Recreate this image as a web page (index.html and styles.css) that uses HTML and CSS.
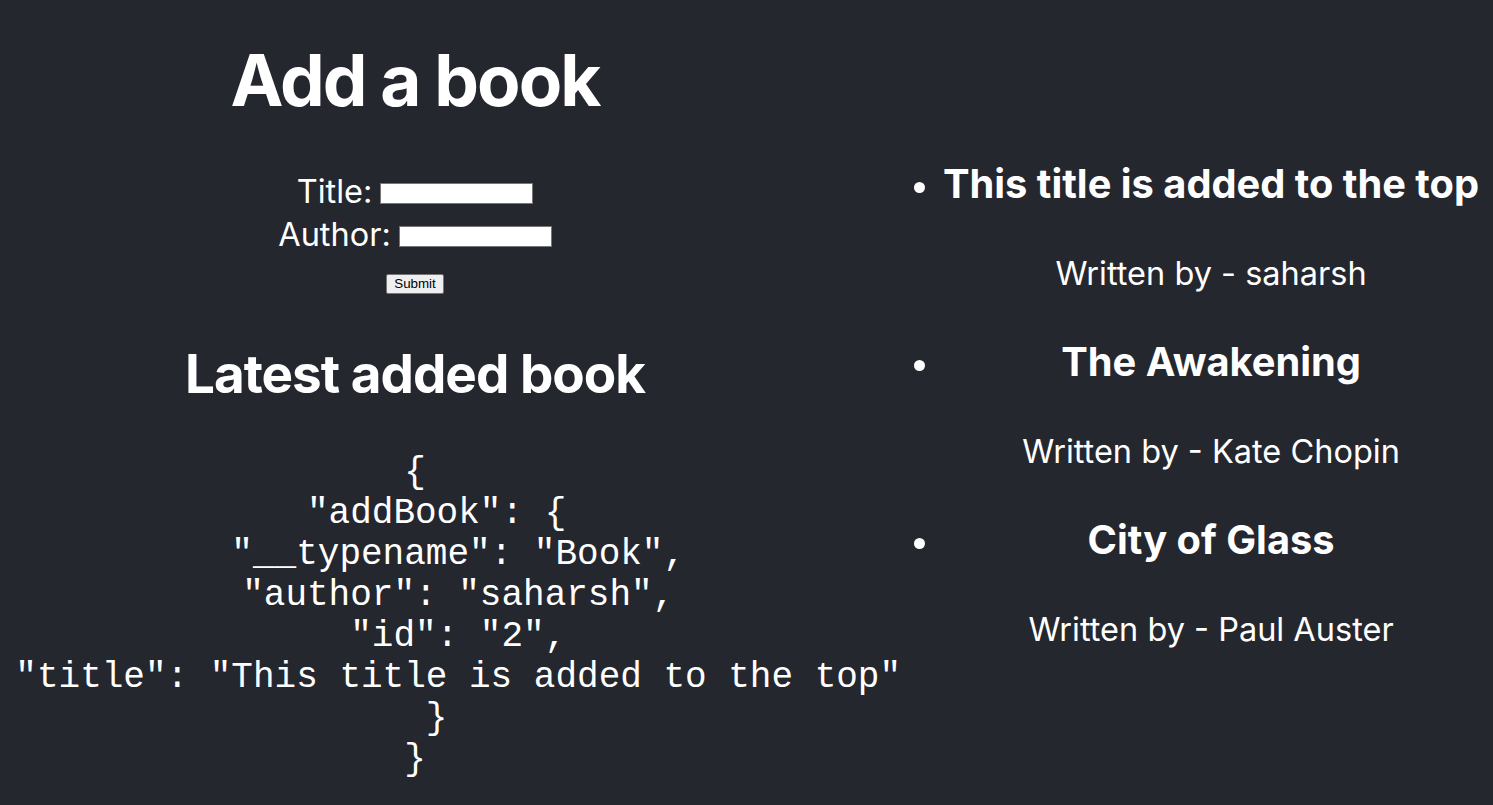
FILE: index.html
```html
<!DOCTYPE html>
<html>
<head>
<meta charset="utf-8">
<link rel="stylesheet" href="styles.css">
</head>
<body>
<div class="app">
  <section class="left">
    <h1 class="page-title">Add a book</h1>
    <form class="book-form">
      <div class="row"><label>Title: </label><input class="field" type="text"></div>
      <div class="row"><label>Author: </label><input class="field" type="text"></div>
      <div class="submit-row"><button class="submit" type="button">Submit</button></div>
    </form>
    <h2 class="sub-title">Latest added book</h2>
<pre class="json">{
  "addBook": {
    "__typename": "Book",
    "author": "saharsh",
    "id": "2",
    "title": "This title is added to the top"
  }
}</pre>
  </section>
  <section class="right">
    <ul class="books">
      <li class="book">
        <h3 class="book-title">This title is added to the top</h3>
        <p class="book-author">Written by - saharsh</p>
      </li>
      <li class="book">
        <h3 class="book-title">The Awakening</h3>
        <p class="book-author">Written by - Kate Chopin</p>
      </li>
      <li class="book">
        <h3 class="book-title">City of Glass</h3>
        <p class="book-author">Written by - Paul Auster</p>
      </li>
    </ul>
  </section>
</div>
</body>
</html>
```

FILE: styles.css
```css
html, body {
  margin: 0;
  padding: 0;
  background: #25272f;
}
body {
  color: #ffffff;
  font-family: Inter, "Noto Sans", sans-serif;
  overflow: hidden;
}
.app {
  display: flex;
  min-height: 805px;
}
.left {
  width: 830px;
  display: flex;
  flex-direction: column;
  align-items: center;
  text-align: center;
}
.page-title {
  font-size: 71px;
  font-weight: 700;
  letter-spacing: -2px;
  line-height: 80px;
  margin: 40px 0 0;
}
.book-form {
  margin-top: 50px;
  display: flex;
  flex-direction: column;
  align-items: center;
}
.row {
  font-size: 32.5px;
  line-height: 43px;
  height: 43px;
  display: flex;
  align-items: center;
  gap: 8px;
}
.field {
  width: 153px;
  height: 21px;
  box-sizing: border-box;
  border: 1px solid #767676;
  background: #fff;
  padding: 0;
  margin: 4px 0 0;
}
.submit-row {
  margin-top: 16px;
}
.submit {
  font-family: "Liberation Sans", Arial, sans-serif;
  font-size: 13.33px;
  height: 20px;
  padding: 1px 7px;
  background: #efefef;
  border: 1px solid #767676;
  border-radius: 2px;
  color: #000;
}
.sub-title {
  font-size: 53px;
  font-weight: 700;
  letter-spacing: -1px;
  line-height: 60px;
  margin: 50px 0 0;
}
.json {
  font-family: "Liberation Mono", "Courier New", monospace;
  font-size: 36px;
  line-height: 41px;
  margin: 48px 0 0;
  text-align: center;
  white-space: pre;
  flex-shrink: 0;
}
.right {
  flex: 1;
}
.books {
  margin: 161px 0 0 73px;
  padding-left: 40px;
  width: max-content;
}
.book {
  text-align: center;
  font-size: 38px;
}
.book::marker {
  font-family: "Liberation Sans", Arial, sans-serif;
}
.book-title {
  font-size: 39.8px;
  font-weight: 700;
  line-height: 46px;
  margin: 0;
}
.book-author {
  font-size: 32.5px;
  font-weight: 400;
  line-height: 40px;
  margin: 47px 0 45px;
}
```
